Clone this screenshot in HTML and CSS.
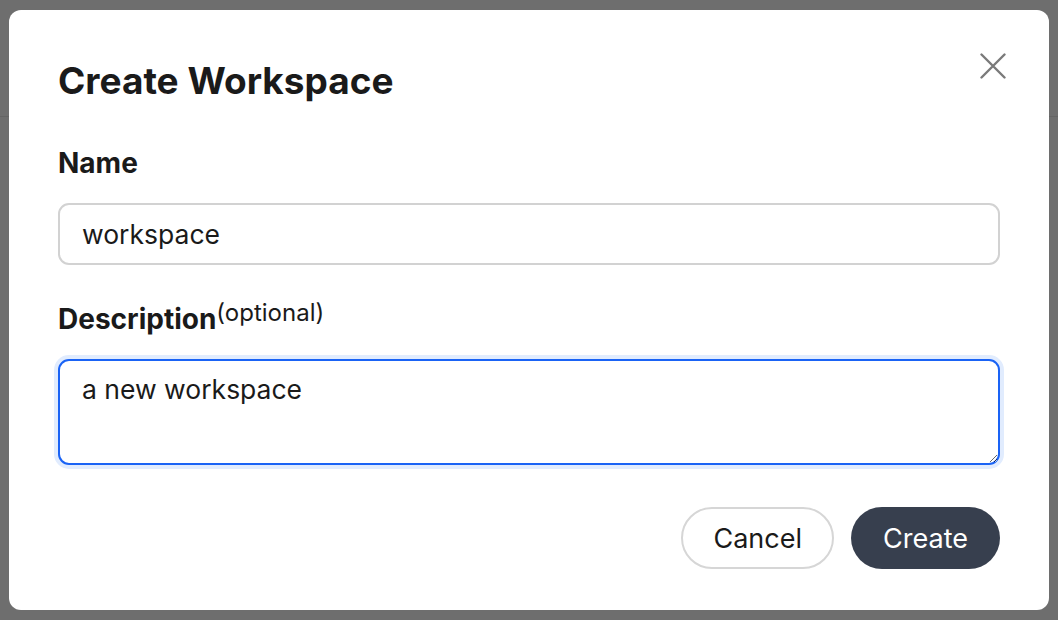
FILE: index.html
```html
<!DOCTYPE html>
<html lang="en">
<head>
<meta charset="utf-8">
<title>Create Workspace</title>
<link rel="stylesheet" href="styles.css">
</head>
<body>
<header class="app-header"></header>
<div class="backdrop">
  <div class="dialog" role="dialog" aria-labelledby="dlg-title">
    <button class="close-btn" type="button" aria-label="Close">
      <svg width="26" height="26" viewBox="0 0 26 26" fill="none" stroke="currentColor" stroke-width="2.4" stroke-linecap="round">
        <path d="M1.5 1.5 L24.5 24.5 M24.5 1.5 L1.5 24.5"/>
      </svg>
    </button>
    <h2 id="dlg-title" class="dialog-title">Create Workspace</h2>
    <form class="dialog-form">
      <div class="field">
        <label class="field-label" for="ws-name">Name</label>
        <input id="ws-name" class="text-input" type="text" value="workspace">
      </div>
      <div class="field">
        <label class="field-label" for="ws-desc">Description<sup class="optional">(optional)</sup></label>
        <textarea id="ws-desc" class="text-area is-focused">a new workspace</textarea>
      </div>
      <div class="actions">
        <button type="button" class="btn btn-secondary">Cancel</button>
        <button type="button" class="btn btn-primary">Create</button>
      </div>
    </form>
  </div>
</div>
</body>
</html>
```
FILE: styles.css
```css
* { box-sizing: border-box; }

html, body {
  margin: 0;
  height: 100%;
}

body {
  background: #6e6e6e;
  font-family: Inter, "Noto Sans", "Liberation Sans", sans-serif;
  color: #1a1a1a;
}

.app-header {
  height: 117px;
  border-bottom: 1px solid #646464;
}

.backdrop {
  position: fixed;
  inset: 0;
}

.dialog {
  position: absolute;
  left: 9px;
  top: 10px;
  width: 1040px;
  height: 600px;
  background: #fff;
  border-radius: 12px;
  padding: 49px 49px 0 49px;
}

.close-btn {
  position: absolute;
  top: 43px;
  right: 43px;
  width: 26px;
  height: 26px;
  padding: 0;
  border: 0;
  background: none;
  color: #7a7a7a;
  display: flex;
}

.dialog-title {
  margin: 0;
  font-size: 37px;
  line-height: 44px;
  font-weight: 700;
}

.dialog-form {
  display: flex;
  flex-direction: column;
  margin-top: 43px;
}

.field {
  display: flex;
  flex-direction: column;
}

.field + .field {
  margin-top: 37px;
}

.field-label {
  font-size: 28px;
  line-height: 34px;
  font-weight: 700;
  margin-bottom: 23px;
}

.optional {
  font-size: 24px;
  font-weight: 400;
  vertical-align: 8px;
  line-height: 0;
}

.text-input,
.text-area {
  font-family: inherit;
  font-size: 26.5px;
  color: #1a1a1a;
  width: 100%;
  border: 2px solid #d2d2d2;
  border-radius: 11px;
  background: #fff;
  outline: none;
  padding: 0 22px;
}

.text-input {
  height: 62px;
}

.text-area {
  height: 106px;
  padding-top: 12px;
  resize: vertical;
}

.text-area.is-focused {
  border-color: #1a63f5;
  box-shadow: 0 0 0 4px #e1ecfe;
}

.actions {
  display: flex;
  justify-content: flex-end;
  gap: 17px;
  margin-top: 42px;
}

.btn {
  font-family: inherit;
  font-size: 27px;
  height: 62px;
  border-radius: 31px;
  padding: 0 30px;
  cursor: pointer;
}

.btn-secondary {
  background: #fff;
  color: #1a1a1a;
  border: 2px solid #d6d6d6;
  min-width: 152px;
}

.btn-primary {
  background: #373f4e;
  color: #fff;
  border: 0;
  min-width: 149px;
}
```
